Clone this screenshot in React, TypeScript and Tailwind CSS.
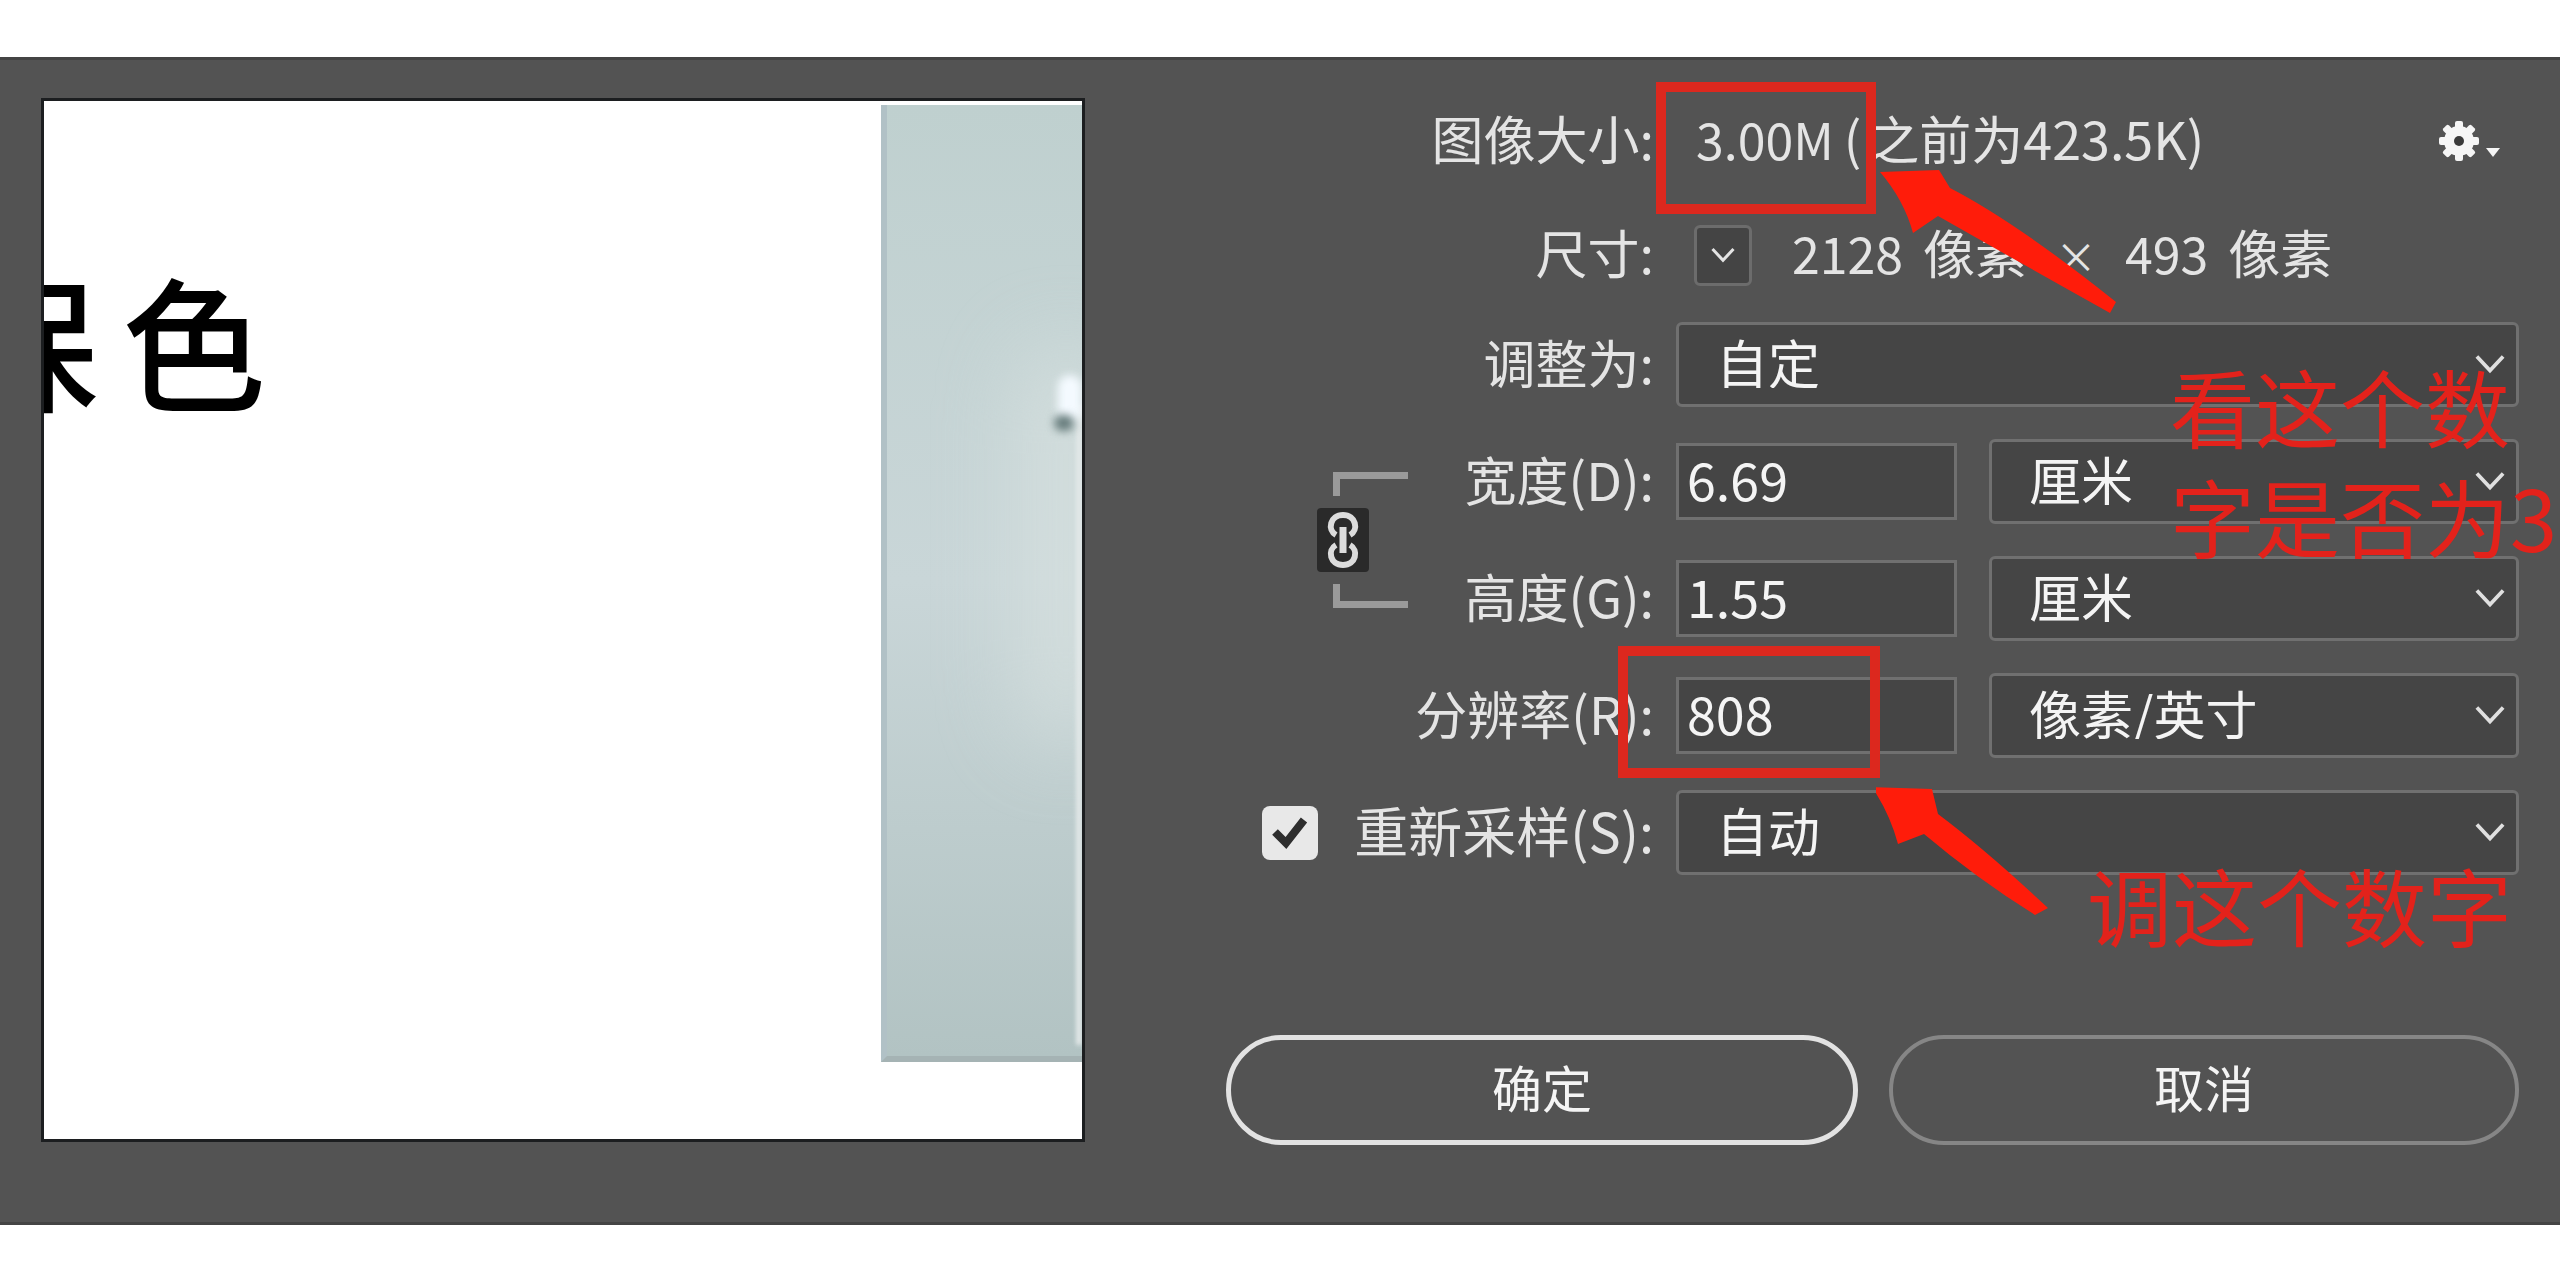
import type { ReactNode } from "react";

const Chevron = ({ className }: { className: string }) => (
  <svg viewBox="0 0 32 20" className={className} fill="none" stroke="currentColor" strokeWidth="4">
    <path d="M2 2 L16 17 L30 2" />
  </svg>
);

const Dropdown = ({ id, label, options }: { id: string; label?: string; options: string[] }) => (
  <div className="relative flex-1 h-[85px]">
    <select
      id={id}
      aria-label={label}
      className="w-full h-full appearance-none rounded-md border-[3px] border-[#707070] bg-[#454545] pl-[37px] pb-1.5 text-[52px] leading-none text-[#f4f4f4]"
    >
      {options.map((option) => (
        <option key={option}>{option}</option>
      ))}
    </select>
    <Chevron className="pointer-events-none absolute right-3.5 top-8 w-[30px] h-5 text-[#e0e0e0]" />
  </div>
);

const NumberField = ({ id, value }: { id: string; value: string }) => (
  <input
    id={id}
    type="text"
    defaultValue={value}
    className="w-[281px] h-[77px] shrink-0 border-[3px] border-[#707070] bg-[#454545] pl-2 pb-1.5 text-[52px] leading-none text-[#f4f4f4]"
  />
);

const Label = ({ id, wide = true, children }: { id?: string; wide?: boolean; children: ReactNode }) => (
  <label
    htmlFor={id}
    className={`${wide ? "w-[428px]" : "w-[245px]"} shrink-0 pb-1.5 text-right text-[52px] leading-none whitespace-nowrap text-[#e4e4e4]`}
  >
    {children}
  </label>
);

const GearIcon = () => (
  <svg viewBox="0 0 72 44" className="w-[72px] h-11" fill="#f5f5f5">
    <g transform="translate(22 22)">
      {[0, 45, 90, 135].map((angle) => (
        <rect key={angle} x="-4" y="-20" width="8" height="40" rx="2" transform={`rotate(${angle})`} />
      ))}
      <circle r="15" />
      <circle r="5" fill="#3a3a3a" />
    </g>
    <path d="M49 29 H63 L56 38 Z" />
  </svg>
);

const LinkIcon = () => (
  <svg viewBox="0 0 52 64" className="w-full h-full" fill="none" stroke="#dcdcdc" strokeWidth="6">
    <path d="M19 27 C10 22 13 7 26 7 C39 7 42 22 33 27" />
    <path d="M19 37 C10 42 13 57 26 57 C39 57 42 42 33 37" />
    <path d="M26 19 V45" strokeWidth="7" />
  </svg>
);

const Preview = () => (
  <div className="relative mt-[38px] aspect-square flex-[1038] overflow-hidden border-[3px] border-[#1c1e20] bg-white text-black">
    <div className="absolute -left-[90px] top-[151px] flex gap-6 text-[144px] leading-[1.2] font-medium">
      <span>保</span>
      <span>色</span>
    </div>
    <div className="absolute right-0 top-1 h-[957px] w-[201px] border-b-[6px] border-l-[6px] border-b-[#a5b3b4] border-l-[#b1c1c6] bg-linear-to-b from-[#bfd0cf] via-[#c9d6d8] to-[#b2c3c3]">
      <div className="absolute inset-0 overflow-hidden">
        <div className="absolute -right-8 top-[240px] h-[400px] w-24 rounded-full bg-[#dbe4e2] opacity-60 blur-2xl" />
        <div className="absolute right-0 top-[300px] h-[640px] w-1.5 bg-[#e2e8e8] blur-[2px]" />
        <div className="absolute right-0 top-[270px] h-12 w-6 rounded-full bg-[#f4faff] blur-xs" />
        <div className="absolute right-2 top-[310px] h-4 w-5 rounded-full bg-[#687d7d] blur-xs" />
      </div>
    </div>
  </div>
);

const Annotations = () => (
  <div className="pointer-events-none absolute inset-0 text-[85px] leading-[110px] whitespace-nowrap text-[#e3221b]">
    <div className="absolute left-[430px] -top-3 h-[132px] w-[220px] border-[10px] border-[#dc281e]" />
    <div className="absolute left-[392px] top-[552px] h-[132px] w-[262px] border-[10px] border-[#dc281e]" />
    <svg viewBox="650 70 260 770" className="absolute left-[650px] top-[70px] h-[770px] w-[260px]" fill="#ff1c0a">
      <path d="M654 78 L713 76 L724 94 Q790 128 890 208 L884 219 Q800 172 712 122 L687 139 Q678 106 654 78 Z" />
      <path d="M646 693 L706 695 L712 720 Q760 756 822 814 L809 821 Q750 784 698 740 L672 750 Q664 720 646 693 Z" />
    </svg>
    <p className="absolute left-[944px] top-[256px]">
      看这个数
      <br />
      字是否为3
    </p>
    <p className="absolute left-[861px] top-[755px]">调这个数字</p>
  </div>
);

const ImageSizeForm = () => (
  <form className="relative flex flex-[1293] flex-col mt-[34px]" onSubmit={(e) => e.preventDefault()}>
    <div className="flex flex-col gap-8">
      <div className="flex h-[94px] items-center gap-[22px]">
        <Label>图像大小:</Label>
        <div className="flex flex-1 items-center text-[52px] leading-none whitespace-nowrap text-[#e4e4e4]">
          <span className="ml-5 pb-1.5 text-[50px]">3.00M</span>
          <span className="ml-2.5 pb-1.5">(</span>
          <span className="ml-1.5 pb-1.5">之前为423.5K)</span>
          <button type="button" aria-label="设置" className="ml-auto mr-2.5">
            <GearIcon />
          </button>
        </div>
      </div>

      <div className="flex h-[70px] items-center gap-[22px]">
        <Label>尺寸:</Label>
        <div className="flex flex-1 items-center text-[52px] leading-none whitespace-nowrap text-[#e4e4e4]">
          <button
            type="button"
            aria-label="尺寸单位"
            className="ml-[18px] mr-10 flex h-[61px] w-[58px] items-center justify-center rounded-md border-[3px] border-[#6c6c6c] bg-[#444]"
          >
            <Chevron className="w-6 h-4" />
          </button>
          <span className="pb-1.5 text-[50px]">2128</span>
          <span className="ml-5 pb-1.5">像素</span>
          <span className="mx-7 text-[42px]">×</span>
          <span className="pb-1.5 text-[50px]">493</span>
          <span className="ml-5 pb-1.5">像素</span>
        </div>
      </div>

      <div className="flex items-center gap-[22px]">
        <Label id="preset">调整为:</Label>
        <Dropdown id="preset" options={["自定"]} />
      </div>

      <div className="flex">
        <div className="flex w-[183px] shrink-0 flex-col justify-center gap-3 pl-[91px]">
          <div className="ml-4 h-6 w-[75px] border-t-[7px] border-l-[7px] border-[#9a9a9a]" />
          <button type="button" aria-label="限制长宽比" className="h-16 w-[52px] rounded bg-[#2a2a2a]">
            <LinkIcon />
          </button>
          <div className="ml-4 h-6 w-[75px] border-b-[7px] border-l-[7px] border-[#9a9a9a]" />
        </div>
        <div className="flex flex-1 flex-col gap-8">
          <div className="flex items-center">
            <Label id="width" wide={false}>宽度(D):</Label>
            <div className="ml-[22px] flex flex-1 items-center gap-8">
              <NumberField id="width" value="6.69" />
              <Dropdown id="width-unit" label="宽度单位" options={["厘米"]} />
            </div>
          </div>
          <div className="flex items-center">
            <Label id="height" wide={false}>高度(G):</Label>
            <div className="ml-[22px] flex flex-1 items-center gap-8">
              <NumberField id="height" value="1.55" />
              <Dropdown id="height-unit" label="高度单位" options={["厘米"]} />
            </div>
          </div>
        </div>
      </div>

      <div className="flex items-center gap-[22px]">
        <Label id="resolution">分辨率(R):</Label>
        <div className="flex flex-1 items-center gap-8">
          <NumberField id="resolution" value="808" />
          <Dropdown id="resolution-unit" label="分辨率单位" options={["像素/英寸"]} />
        </div>
      </div>

      <div className="flex items-center gap-[22px]">
        <div className="flex w-[428px] items-center justify-between pl-9">
          <span className="grid h-[54px] w-14 place-items-center">
            <input
              id="resample"
              type="checkbox"
              defaultChecked
              className="col-start-1 row-start-1 h-full w-full appearance-none rounded-lg bg-[#e8e8e8]"
            />
            <svg
              viewBox="0 0 36 34"
              className="pointer-events-none col-start-1 row-start-1 h-[34px] w-9"
              fill="none"
              stroke="#2e2e2e"
              strokeWidth="8"
            >
              <path d="M3 16 L14 27 L32 4" />
            </svg>
          </span>
          <label htmlFor="resample" className="pb-1.5 text-[54px] leading-none whitespace-nowrap text-[#e4e4e4]">
            重新采样(S):
          </label>
        </div>
        <Dropdown id="resample-mode" label="重新采样方式" options={["自动"]} />
      </div>
    </div>

    <div className="mt-40 flex gap-[31px] text-[50px] leading-none text-[#f4f4f4]">
      <button type="submit" className="h-[110px] flex-1 rounded-full border-[5px] border-[#e2e2e2] pb-2">
        确定
      </button>
      <button type="button" className="h-[110px] flex-1 rounded-full border-4 border-[#868686] pb-2">
        取消
      </button>
    </div>

    <Annotations />
  </form>
);

const App = () => (
  <div className="bg-white py-[57px] font-['Noto_Sans_CJK_SC','Noto_Sans',sans-serif]">
    <main className="flex items-start gap-[141px] border-y-[3px] border-[#444] bg-[#535353] px-[41px] pb-[77px]">
      <Preview />
      <ImageSizeForm />
    </main>
  </div>
);

export default App;
